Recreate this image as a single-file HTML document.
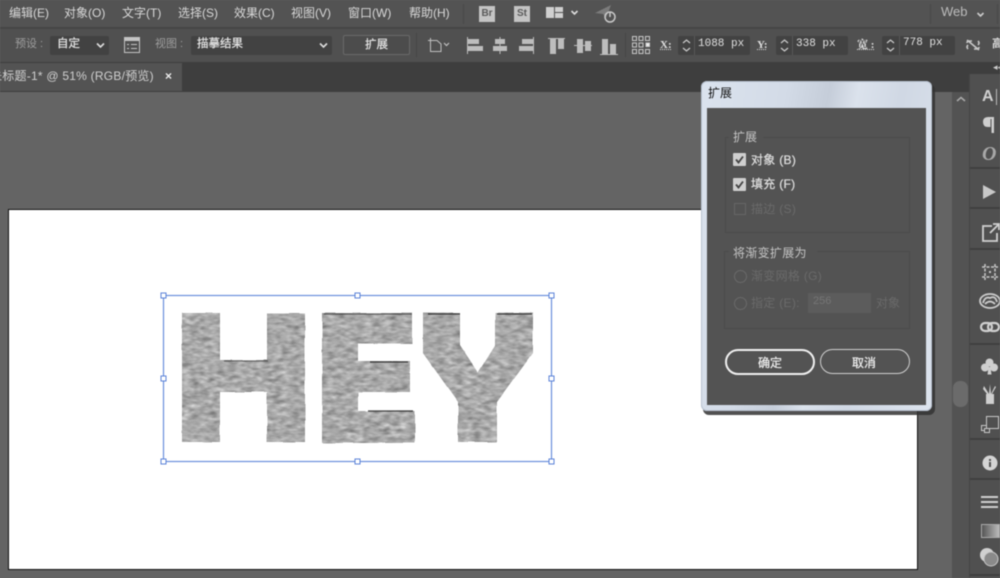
<!DOCTYPE html>
<html><head><meta charset="utf-8">
<style>
html,body{margin:0;padding:0;background:#646464}
#r{position:relative;width:1000px;height:578px;overflow:hidden;background:#646464;font-family:"Liberation Sans","Noto Sans CJK SC",sans-serif;color:#ddd;filter:blur(.5px)}
.a{position:absolute}
.t{position:absolute;white-space:nowrap;line-height:1}
.m{top:7px;font-size:12px;color:#d8d8d8}
.s{-webkit-text-stroke:.25px currentColor}
.b{position:absolute;background:#424242;border-radius:2px}
.i{position:absolute;background:#cfcfcf}
svg{position:absolute;overflow:visible}
.l{font-family:"Liberation Serif","Noto Serif CJK SC",serif;font-size:11px;color:#e0e0e0;font-weight:bold;text-decoration:underline dotted}
.n{font-size:11px;color:#e0e0e0;font-family:"Liberation Mono","Noto Sans CJK SC",monospace}
</style></head><body>
<div id="r">
<!-- menu bar -->
<div class="a" style="left:0;top:0;width:1000px;height:27px;background:#535353"></div>
<div class="a" style="left:0;top:27px;width:1000px;height:2px;background:#454545"></div>
<div class="t m" style="left:9px">编辑(E)</div>
<div class="t m" style="left:64px">对象(O)</div>
<div class="t m" style="left:122px">文字(T)</div>
<div class="t m" style="left:178px">选择(S)</div>
<div class="t m" style="left:234px">效果(C)</div>
<div class="t m" style="left:291px">视图(V)</div>
<div class="t m" style="left:348px">窗口(W)</div>
<div class="t m" style="left:409px">帮助(H)</div>
<div class="a" style="left:463px;top:4px;width:1px;height:20px;background:#484848"></div>
<div class="a" style="left:479px;top:6px;width:16px;height:16px;background:#c4c4c4;color:#5a5a5a;font:bold 10px/16px 'Liberation Sans';text-align:center">Br</div>
<div class="a" style="left:514px;top:6px;width:16px;height:16px;background:#c4c4c4;color:#5a5a5a;font:bold 10px/16px 'Liberation Sans';text-align:center">St</div>
<div class="i" style="left:546px;top:7px;width:8px;height:11px;background:#d0d0d0"></div>
<div class="i" style="left:555px;top:7px;width:8px;height:5px;background:#d0d0d0"></div>
<div class="i" style="left:555px;top:13px;width:8px;height:5px;background:#d0d0d0"></div>
<svg style="left:570px;top:9px" width="10" height="7"><path d="M1.5 2 L4.5 5 L7.5 2" fill="none" stroke="#ddd" stroke-width="1.6"/></svg>
<svg style="left:594px;top:4px" width="24" height="20"><path d="M1 9 L17 1 L12 14 L9 10 Z" fill="#7b7b7b"/><circle cx="16" cy="13" r="5" fill="none" stroke="#c8c8c8" stroke-width="1.5"/><path d="M16 8 V13" stroke="#c8c8c8" stroke-width="1.5"/></svg>
<div class="a" style="left:930px;top:4px;width:1px;height:20px;background:#484848"></div>
<div class="t" style="left:941px;top:5px;font-size:13px;color:#bcbcbc">Web</div>
<svg style="left:976px;top:11px" width="10" height="7"><path d="M1.5 2 L4.5 5 L7.5 2" fill="none" stroke="#ccc" stroke-width="1.6"/></svg>
<div class="a" style="left:997px;top:4px;width:1px;height:20px;background:#484848"></div>
<!-- control bar -->
<div class="a" style="left:0;top:29px;width:1000px;height:33px;background:#505050"></div>
<div class="t" style="left:15px;top:39px;font-size:11px;color:#9e9e9e">预设 :</div>
<div class="b" style="left:50px;top:36px;width:59px;height:19px"></div>
<div class="t s" style="left:57px;top:39px;font-size:11.500px;color:#e2e2e2">自定</div>
<svg style="left:96px;top:42px" width="10" height="7"><path d="M1 1.5 L4.5 5 L8 1.5" fill="none" stroke="#ddd" stroke-width="1.6"/></svg>
<svg style="left:124px;top:37px" width="16" height="16"><rect x=".5" y=".5" width="15" height="15" fill="none" stroke="#c4c4c4"/><rect x="0" y="0" width="16" height="4" fill="#c4c4c4"/><path d="M3 7.5H5M7 7.5H13M3 11.5H5M7 11.5H13" stroke="#c4c4c4"/></svg>
<div class="t" style="left:155px;top:39px;font-size:11px;color:#9e9e9e">视图 :</div>
<div class="b" style="left:191px;top:36px;width:141px;height:19px"></div>
<div class="t s" style="left:197px;top:39px;font-size:11.500px;color:#e2e2e2">描摹结果</div>
<svg style="left:319px;top:42px" width="10" height="7"><path d="M1 1.5 L4.5 5 L8 1.5" fill="none" stroke="#ddd" stroke-width="1.6"/></svg>
<div class="a" style="left:343px;top:35px;width:65px;height:18px;border:1px solid #6a6a6a;border-radius:2px;background:#4c4c4c"></div>
<div class="t s" style="left:365px;top:40px;font-size:11.500px;color:#e2e2e2">扩展</div>
<div class="a" style="left:416px;top:33px;width:1px;height:24px;background:#454545"></div>
<svg style="left:427px;top:37px" width="26" height="16"><path d="M3.5 3.5 H10 L14 7 V14.5 H3.5 Z" fill="none" stroke="#c0c0c0"/><path d="M1 3.5H6M3.5 1V6" stroke="#c0c0c0"/><path d="M17 6 L19.5 8.5 L22 6" fill="none" stroke="#c0c0c0" stroke-width="1.2"/></svg>
<!-- align icons -->
<svg style="left:466px;top:36px" width="150" height="20" fill="#bdbdbd">
<rect x="1" y="1" width="1" height="17"/><rect x="2" y="3" width="11" height="5"/><rect x="2" y="10" width="15" height="5"/>
<rect x="33.500" y="1" width="1" height="17"/><rect x="29" y="3" width="10" height="5"/><rect x="27" y="10" width="14" height="5"/>
<rect x="67" y="1" width="1" height="17"/><rect x="56" y="3" width="11" height="5"/><rect x="53" y="10" width="14" height="5"/>
<rect x="82" y="2" width="17" height="1"/><rect x="84" y="3" width="6" height="15"/><rect x="92" y="3" width="6" height="10"/>
<rect x="108" y="9" width="18" height="1"/><rect x="111" y="3" width="6" height="14"/><rect x="119" y="5" width="6" height="10"/>
<rect x="134" y="18" width="18" height="1"/><rect x="136" y="3" width="6" height="15"/><rect x="144" y="8" width="6" height="10"/>
</svg>
<div class="a" style="left:625px;top:33px;width:1px;height:24px;background:#454545"></div>
<svg style="left:631px;top:35px" width="20" height="20" fill="none" stroke="#c8c8c8"><rect x="1.500" y="1.500" width="4" height="4"/><rect x="8" y="1.500" width="4" height="4"/><rect x="14.500" y="1.500" width="4" height="4"/><rect x="1.500" y="8" width="4" height="4"/><rect x="8" y="8" width="4" height="4"/><rect x="15" y="8" width="3.500" height="3.500" fill="#eee"/><rect x="1.500" y="14.500" width="4" height="4"/><rect x="8" y="14.500" width="4" height="4"/><rect x="14.500" y="14.500" width="4" height="4"/></svg>
<div class="t l" style="left:660px;top:40px">X:</div>
<div class="b" style="left:678px;top:36px;width:72px;height:19px"></div>
<div class="a" style="left:694px;top:36px;width:1px;height:19px;background:#585858"></div>
<svg style="left:681px;top:38px" width="11" height="15" fill="none" stroke="#ccc" stroke-width="1.200"><path d="M2 5 L5.500 2 L9 5M2 10 L5.500 13 L9 10"/></svg>
<div class="t n" style="left:698px;top:39px">1088 px</div>
<div class="t l" style="left:757px;top:40px">Y:</div>
<div class="b" style="left:776px;top:36px;width:72px;height:19px"></div>
<div class="a" style="left:792px;top:36px;width:1px;height:19px;background:#585858"></div>
<svg style="left:779px;top:38px" width="11" height="15" fill="none" stroke="#ccc" stroke-width="1.200"><path d="M2 5 L5.500 2 L9 5M2 10 L5.500 13 L9 10"/></svg>
<div class="t n" style="left:796px;top:39px">338 px</div>
<div class="t l" style="left:857px;top:40px;font-size:11px">宽 :</div>
<div class="b" style="left:882px;top:36px;width:73px;height:19px"></div>
<div class="a" style="left:899px;top:36px;width:1px;height:19px;background:#585858"></div>
<svg style="left:885px;top:38px" width="11" height="15" fill="none" stroke="#ccc" stroke-width="1.200"><path d="M2 5 L5.500 2 L9 5M2 10 L5.500 13 L9 10"/></svg>
<div class="t n" style="left:903px;top:38px">778 px</div>
<svg style="left:965px;top:38px" width="16" height="14" fill="none" stroke="#c8c8c8" stroke-width="1.600"><path d="M2 5 Q2 3 4 3 H7 M9 11 H12 Q14 11 14 9 M3 11 Q1 9 3 7 M13 3 Q15 5 13 7 M2 2 L14 12"/></svg>
<div class="t" style="left:992px;top:39px;font-size:11px;font-weight:bold;color:#ddd">高</div>
<!-- tab strip -->
<div class="a" style="left:0;top:62px;width:1000px;height:30px;background:#3e3e3e"></div>
<div class="a" style="left:0;top:63px;width:182px;height:28px;background:#535353"></div>
<div class="t" style="left:-10px;top:70px;font-size:12px;color:#d0d0d0;letter-spacing:.24px">未标题-1* @ 51% (RGB/预览)</div>
<div class="t" style="left:165px;top:70px;font-size:12px;font-weight:bold;color:#eee">×</div>
<!-- artboard -->
<div class="a" style="left:8px;top:209px;width:908px;height:359px;background:#fff;border:1px solid #111"></div>
<!-- letters -->
<svg style="left:0;top:0" width="1000" height="578">
<defs>
<filter id="tex" x="-5%" y="-5%" width="110%" height="110%" color-interpolation-filters="sRGB">
<feTurbulence type="fractalNoise" baseFrequency="0.11 0.24" numOctaves="2" seed="7" result="n"/>
<feTurbulence type="fractalNoise" baseFrequency="0.05" numOctaves="1" seed="3" result="e"/>
<feDisplacementMap in="SourceGraphic" in2="e" scale="2.500" xChannelSelector="R" yChannelSelector="G" result="shape"/>
<feColorMatrix in="n" type="matrix" values="0.32 0.32 0 0 0.34  0.32 0.32 0 0 0.34  0.32 0.32 0 0 0.34  0 0 0 0 1" result="g"/>
<feComposite in="g" in2="shape" operator="in"/>
</filter>
</defs>
<g filter="url(#tex)" fill="#aaa">
<path d="M182 313H220V360H267V313H305V442H267V392H220V442H182Z"/>
<path d="M322 313H412V344H358V361H410V392H358V411H415V443H322Z"/>
<path d="M423 313H460V345L478 372L495 345V313H533V353L497 402V442H458V402L423 353Z"/>
</g>
<g stroke="#222" stroke-width="1.200" fill="none" opacity=".85">
<path d="M224 361H268" opacity=".6"/>
<path d="M324 314H412" opacity=".7"/>
<path d="M370 362H408"/>
<path d="M368 411H413"/>
<path d="M428 314H460"/>
<path d="M497 314H532"/>
</g>
<rect x="163.500" y="295.500" width="388" height="166" fill="none" stroke="#6a8fdc" stroke-width="1.200"/>
<g fill="#fff" stroke="#5a82d8">
<rect x="161" y="293" width="5" height="5"/><rect x="355" y="293" width="5" height="5"/><rect x="549" y="293" width="5" height="5"/>
<rect x="161" y="376" width="5" height="5"/><rect x="549" y="376" width="5" height="5"/>
<rect x="161" y="459" width="5" height="5"/><rect x="355" y="459" width="5" height="5"/><rect x="549" y="459" width="5" height="5"/>
</g>
</svg>
<!-- scrollbar + right panel -->
<div class="a" style="left:952px;top:92px;width:18px;height:486px;background:#535353"></div>
<svg style="left:956px;top:96px" width="10" height="7"><path d="M1 5 L5 1.500 L9 5" fill="none" stroke="#aaa" stroke-width="1.500"/></svg>
<div class="a" style="left:953px;top:381px;width:15px;height:26px;background:#6b6b6b;border-radius:7px"></div>
<div class="a" style="left:970px;top:74px;width:30px;height:504px;background:#505050"></div>
<div class="a" style="left:969px;top:74px;width:1px;height:504px;background:#454545"></div>
<div class="t" style="left:993px;top:63px;font-size:9px;color:#ccc">◂◂</div>
<div class="a" style="left:970px;top:167px;width:30px;height:2px;background:#404040"></div>
<div class="a" style="left:970px;top:207px;width:30px;height:2px;background:#404040"></div>
<div class="a" style="left:970px;top:248px;width:30px;height:2px;background:#404040"></div>
<div class="a" style="left:970px;top:343px;width:30px;height:2px;background:#404040"></div>
<div class="a" style="left:970px;top:438px;width:30px;height:2px;background:#404040"></div>
<div class="a" style="left:970px;top:478px;width:30px;height:2px;background:#404040"></div>
<div class="a" style="left:970px;top:574px;width:30px;height:2px;background:#404040"></div>
<div class="t" style="left:982px;top:89px;font-size:16px;color:#d0d0d0;font-weight:bold">A</div>
<div class="a" style="left:996px;top:89px;width:1px;height:16px;background:#bbb"></div>
<svg style="left:983px;top:117px" width="11" height="16" fill="#cfcfcf"><path d="M5 0H11V16H8.500V2H7.500V10H5Q0 10 0 5Q0 0 5 0Z"/></svg>
<div class="t" style="left:982px;top:143px;font:italic bold 20px 'Liberation Serif';color:#a8a8a8">O</div>
<svg style="left:983px;top:185px" width="14" height="14"><path d="M0 0 L13 7 L0 14Z" fill="#c8c8c8"/></svg>
<svg style="left:981px;top:223px" width="19" height="19" fill="none" stroke="#d0d0d0" stroke-width="1.800"><path d="M11 3H2V18H16V10M9 10L18 1M12 1H18V7"/></svg>
<svg style="left:982px;top:264px" width="16" height="16" fill="none" stroke="#c8c8c8" stroke-width="1.500"><path d="M3 0V16M13 0V16M0 3H16M0 13H16" stroke-dasharray="3 1.500"/><rect x="7" y="7" width="2" height="2" fill="#c8c8c8" stroke="none"/></svg>
<svg style="left:979px;top:291px" width="21" height="18" fill="none" stroke="#ccc" stroke-width="1.800"><ellipse cx="11" cy="10" rx="10" ry="7"/><path d="M4 12 Q6 5 11 7 Q16 4 18 11 M6 13 Q11 8 16 13"/></svg>
<svg style="left:980px;top:321px" width="20" height="13" fill="none" stroke="#d0d0d0" stroke-width="2.200"><rect x="1" y="2" width="11" height="8" rx="4"/><rect x="8" y="2" width="11" height="8" rx="4"/></svg>
<svg style="left:981px;top:358px" width="17" height="17" fill="#cfcfcf"><circle cx="8.500" cy="4.500" r="4"/><circle cx="4" cy="9.500" r="4"/><circle cx="13" cy="9.500" r="4"/><path d="M7.500 9H9.500L10.500 16.500H6.500Z"/></svg>
<svg style="left:982px;top:384px" width="16" height="21" fill="#cfcfcf"><path d="M4 10H12V20H4Z"/><path d="M2 2L7 10H5L1 5ZM8 0L9 10H7ZM14 3L10 10H9L13 2Z"/></svg>
<svg style="left:981px;top:415px" width="18" height="18" fill="none" stroke="#c8c8c8"><rect x="5.500" y="1.500" width="12" height="12"/><rect x=".5" y="10.500" width="5" height="5"/><rect x="3.500" y="13.500" width="5" height="4" fill="#505050"/></svg>
<svg style="left:982px;top:455px" width="16" height="16"><circle cx="8" cy="8" r="7.500" fill="#d4d4d4"/><rect x="7" y="7" width="2" height="5" fill="#505050"/><rect x="7" y="4" width="2" height="2" fill="#505050"/></svg>
<div class="i" style="left:981px;top:496px;width:17px;height:2px"></div>
<div class="i" style="left:981px;top:501px;width:17px;height:2px"></div>
<div class="i" style="left:981px;top:506px;width:17px;height:2px"></div>
<div class="a" style="left:981px;top:524px;width:17px;height:12px;background:linear-gradient(90deg,#555,#bbb);border:1px solid #aaa"></div>
<svg style="left:979px;top:547px" width="21" height="21"><circle cx="8" cy="8" r="7" fill="#d0d0d0"/><circle cx="12" cy="12" r="7" fill="#8a8a8a" stroke="#c8c8c8"/></svg>
<!-- dialog -->
<div class="a" style="left:703px;top:84px;width:232px;height:331px;background:#333;opacity:.85;border-radius:6px"></div>
<div class="a" style="left:701px;top:81px;width:231px;height:330px;border-radius:6px;background:linear-gradient(100deg,#dbe3ee 0%,#d3dbe7 30%,#c5cdd9 45%,#dbe2ec 55%,#d0d8e4 70%,#dde4ee 100%);box-shadow:inset 0 0 0 1px #b9c3d1"></div>
<div class="a" style="left:707px;top:108px;width:219px;height:297px;background:#535353"></div>
<div class="t" style="left:708px;top:87px;font-size:12px;color:#111">扩展</div>
<div class="a" style="left:725px;top:137px;width:183px;height:94px;border:1px solid #4b4b4b"></div>
<div class="a" style="left:729px;top:130px;width:34px;height:14px;background:#535353"></div>
<div class="t" style="left:733px;top:131px;font-size:12px;color:#c4c4c4">扩展</div>
<svg style="left:733px;top:153px" width="13" height="13"><rect width="13" height="13" rx="1" fill="#cfcfcf"/><path d="M3 6.500L5.500 9.500L10 3.500" fill="none" stroke="#444" stroke-width="1.800"/></svg>
<svg style="left:733px;top:178px" width="13" height="13"><rect width="13" height="13" rx="1" fill="#cfcfcf"/><path d="M3 6.500L5.500 9.500L10 3.500" fill="none" stroke="#444" stroke-width="1.800"/></svg>
<div class="a" style="left:734px;top:203px;width:10px;height:10px;border:1px solid #666"></div>
<div class="t s" style="left:751px;top:154px;font-size:12px;color:#dedede;letter-spacing:.3px">对象 (B)</div>
<div class="t s" style="left:751px;top:178px;font-size:12px;color:#dedede;letter-spacing:.3px">填充 (F)</div>
<div class="t" style="left:751px;top:203px;font-size:12px;color:#6a6a6a;letter-spacing:.3px">描边 (S)</div>
<div class="a" style="left:724px;top:251px;width:184px;height:76px;border:1px solid #4b4b4b"></div>
<div class="a" style="left:729px;top:245px;width:88px;height:14px;background:#535353"></div>
<div class="t" style="left:733px;top:247px;font-size:12px;color:#c4c4c4;letter-spacing:.3px">将渐变扩展为</div>
<div class="a" style="left:734px;top:270px;width:11px;height:11px;border:1px solid #6a6a6a;border-radius:50%"></div>
<div class="a" style="left:734px;top:297px;width:11px;height:11px;border:1px solid #6a6a6a;border-radius:50%"></div>
<div class="t" style="left:751px;top:270px;font-size:12px;color:#6a6a6a;letter-spacing:.3px">渐变网格 (G)</div>
<div class="t" style="left:751px;top:297px;font-size:12px;color:#6a6a6a;letter-spacing:.3px">指定 (E):</div>
<div class="a" style="left:808px;top:293px;width:63px;height:20px;background:#5c5c5c"></div>
<div class="t" style="left:813px;top:296px;font-size:11px;color:#757575">256</div>
<div class="t" style="left:876px;top:297px;font-size:12px;color:#6a6a6a">对象</div>
<div class="a" style="left:725px;top:349px;width:86px;height:22px;border:2px solid #f0f0f0;border-radius:13px"></div>
<div class="a" style="left:820px;top:349px;width:88px;height:23px;border:1px solid #d0d0d0;border-radius:13px"></div>
<div class="t s" style="left:758px;top:357px;font-size:12px;color:#eee">确定</div>
<div class="t s" style="left:852px;top:357px;font-size:12px;color:#eee">取消</div>
</div>
</body></html>
